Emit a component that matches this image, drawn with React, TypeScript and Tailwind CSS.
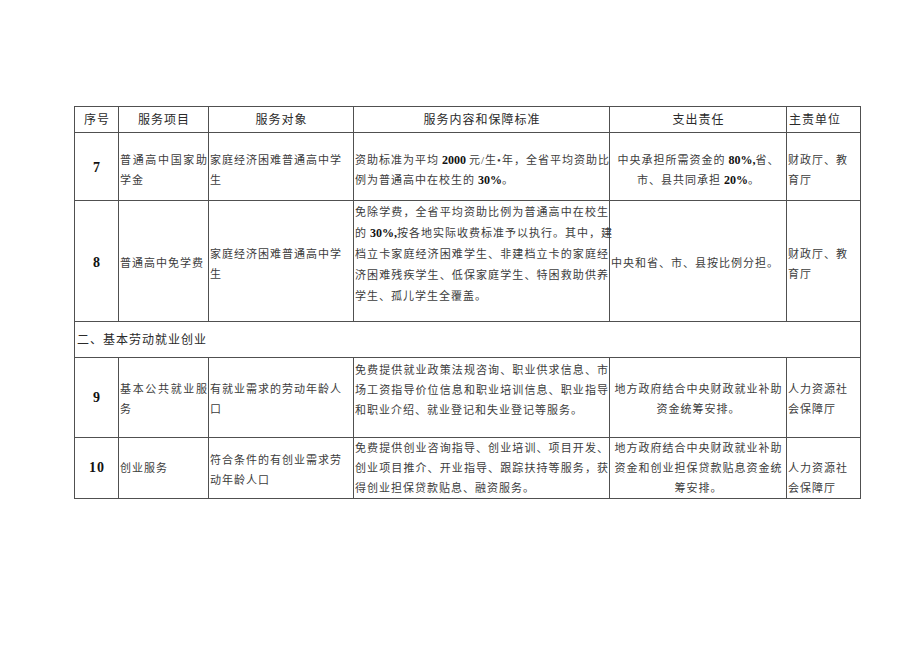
import React from "react";

type Seg = string | { b: string };

const Line = ({ parts, justify }: { parts: Seg[]; justify?: boolean }) => (
  <div
    className={
      justify
        ? "whitespace-nowrap text-justify [text-align-last:justify]"
        : "whitespace-nowrap"
    }
  >
    {parts.map((p, i) =>
      typeof p === "string" ? (
        <span key={i}>{p}</span>
      ) : (
        <b key={i} className="font-bold text-[#111] text-[12px] tracking-[0px]">
          {p.b}
        </b>
      )
    )}
  </div>
);

// every line but the last is justified when `fill` is set
const Lines = ({ lines, fill }: { lines: Seg[][]; fill?: boolean }) => (
  <>
    {lines.map((l, i) => (
      <Line key={i} parts={l} justify={fill && i < lines.length - 1} />
    ))}
  </>
);

const cell = "border border-[#505050] p-0 pl-[1px] align-middle";
const num = "font-bold text-[14px] text-[#111] text-center";

const App = () => {
  return (
    <div
      className="min-h-[651px] w-[920px] bg-white pt-[106px] pl-[74px] text-[#3c3c3c]"
      style={{ fontFamily: '"Liberation Serif", "Noto Sans CJK SC", serif' }}
    >
      <table className="table-fixed border-collapse w-[786px] text-[11px] leading-[20px] tracking-[1px]">
        <colgroup>
          <col className="w-[44px]" />
          <col className="w-[90px]" />
          <col className="w-[145px]" />
          <col className="w-[256px]" />
          <col className="w-[177px]" />
          <col className="w-[74px]" />
        </colgroup>
        <tbody>
          {/* header */}
          <tr className="h-[26px] text-[12px] text-[#2a2a2a]">
            <td className={`${cell} text-center`}>序号</td>
            <td className={`${cell} text-center`}>服务项目</td>
            <td className={`${cell} text-center`}>服务对象</td>
            <td className={`${cell} text-center`}>服务内容和保障标准</td>
            <td className={`${cell} text-center`}>支出责任</td>
            <td className={`${cell} pl-[2px]`}>主责单位</td>
          </tr>

          {/* 7 */}
          <tr className="h-[68px]">
            <td className={`${cell} ${num} pt-[3px]`}>7</td>
            <td className={`${cell} pt-[6px]`}>
              <Lines lines={[["普通高中国家助"], ["学金"]]} fill />
            </td>
            <td className={`${cell} pt-[6px]`}>
              <Lines lines={[["家庭经济困难普通高中学"], ["生"]]} />
            </td>
            <td className={`${cell} pt-[6px]`}>
              <Lines
                fill
                lines={[
                  ["资助标准为平均", { b: " 2000 " }, "元/生•年，全省平均资助比"],
                  ["例为普通高中在校生的", { b: " 30%" }, "。"],
                ]}
              />
            </td>
            <td className={`${cell} text-center pt-[6px]`}>
              <Lines
                lines={[
                  ["中央承担所需资金的", { b: " 80%," }, "省、"],
                  ["市、县共同承担", { b: " 20%" }, "。"],
                ]}
              />
            </td>
            <td className={`${cell} pt-[6px]`}>
              <Lines lines={[["财政厅、教"], ["育厅"]]} />
            </td>
          </tr>

          {/* 8 */}
          <tr className="h-[121px]">
            <td className={`${cell} ${num} pt-[4px]`}>8</td>
            <td className={`${cell} pt-[4px]`}>普通高中免学费</td>
            <td className={`${cell} pt-[6px]`}>
              <Lines lines={[["家庭经济困难普通高中学"], ["生"]]} />
            </td>
            <td className={`${cell} !align-top pt-[1px] leading-[21px]`}>
              <Lines
                fill
                lines={[
                  ["免除学费，全省平均资助比例为普通高中在校生"],
                  ["的", { b: " 30%," }, "按各地实际收费标准予以执行。其中，建"],
                  ["档立卡家庭经济困难学生、非建档立卡的家庭经"],
                  ["济困难残疾学生、低保家庭学生、特困救助供养"],
                  ["学生、孤儿学生全覆盖。"],
                ]}
              />
            </td>
            <td className={`${cell} pt-[4px]`}>中央和省、市、县按比例分担。</td>
            <td className={`${cell} pt-[6px]`}>
              <Lines lines={[["财政厅、教"], ["育厅"]]} />
            </td>
          </tr>

          {/* section */}
          <tr className="h-[36px]">
            <td colSpan={6} className={`${cell} text-[12px] text-[#2a2a2a] pl-[2px]`}>
              二、基本劳动就业创业
            </td>
          </tr>

          {/* 9 */}
          <tr className="h-[80px]">
            <td className={`${cell} ${num}`}>9</td>
            <td className={`${cell} pt-[3px]`}>
              <Lines lines={[["基本公共就业服"], ["务"]]} fill />
            </td>
            <td className={`${cell} pt-[3px]`}>
              <Lines lines={[["有就业需求的劳动年龄人"], ["口"]]} />
            </td>
            <td className={`${cell} !align-top pt-[2px]`}>
              <Lines
                fill
                lines={[
                  ["免费提供就业政策法规咨询、职业供求信息、市"],
                  ["场工资指导价位信息和职业培训信息、职业指导"],
                  ["和职业介绍、就业登记和失业登记等服务。"],
                ]}
              />
            </td>
            <td className={`${cell} text-center pt-[2px]`}>
              <Lines lines={[["地方政府结合中央财政就业补助"], ["资金统筹安排。"]]} />
            </td>
            <td className={`${cell} pt-[2px]`}>
              <Lines lines={[["人力资源社"], ["会保障厅"]]} />
            </td>
          </tr>

          {/* 10 */}
          <tr className="h-[60px]">
            <td className={`${cell} ${num}`}>10</td>
            <td className={`${cell}`}>创业服务</td>
            <td className={`${cell} pt-[4px]`}>
              <Lines lines={[["符合条件的有创业需求劳"], ["动年龄人口"]]} />
            </td>
            <td className={`${cell}`}>
              <Lines
                fill
                lines={[
                  ["免费提供创业咨询指导、创业培训、项目开发、"],
                  ["创业项目推介、开业指导、跟踪扶持等服务，获"],
                  ["得创业担保贷款贴息、融资服务。"],
                ]}
              />
            </td>
            <td className={`${cell} text-center`}>
              <Lines
                lines={[
                  ["地方政府结合中央财政就业补助"],
                  ["资金和创业担保贷款贴息资金统"],
                  ["筹安排。"],
                ]}
              />
            </td>
            <td className={`${cell} !align-bottom`}>
              <Lines lines={[["人力资源社"], ["会保障厅"]]} />
            </td>
          </tr>
        </tbody>
      </table>
    </div>
  );
};

export default App;
